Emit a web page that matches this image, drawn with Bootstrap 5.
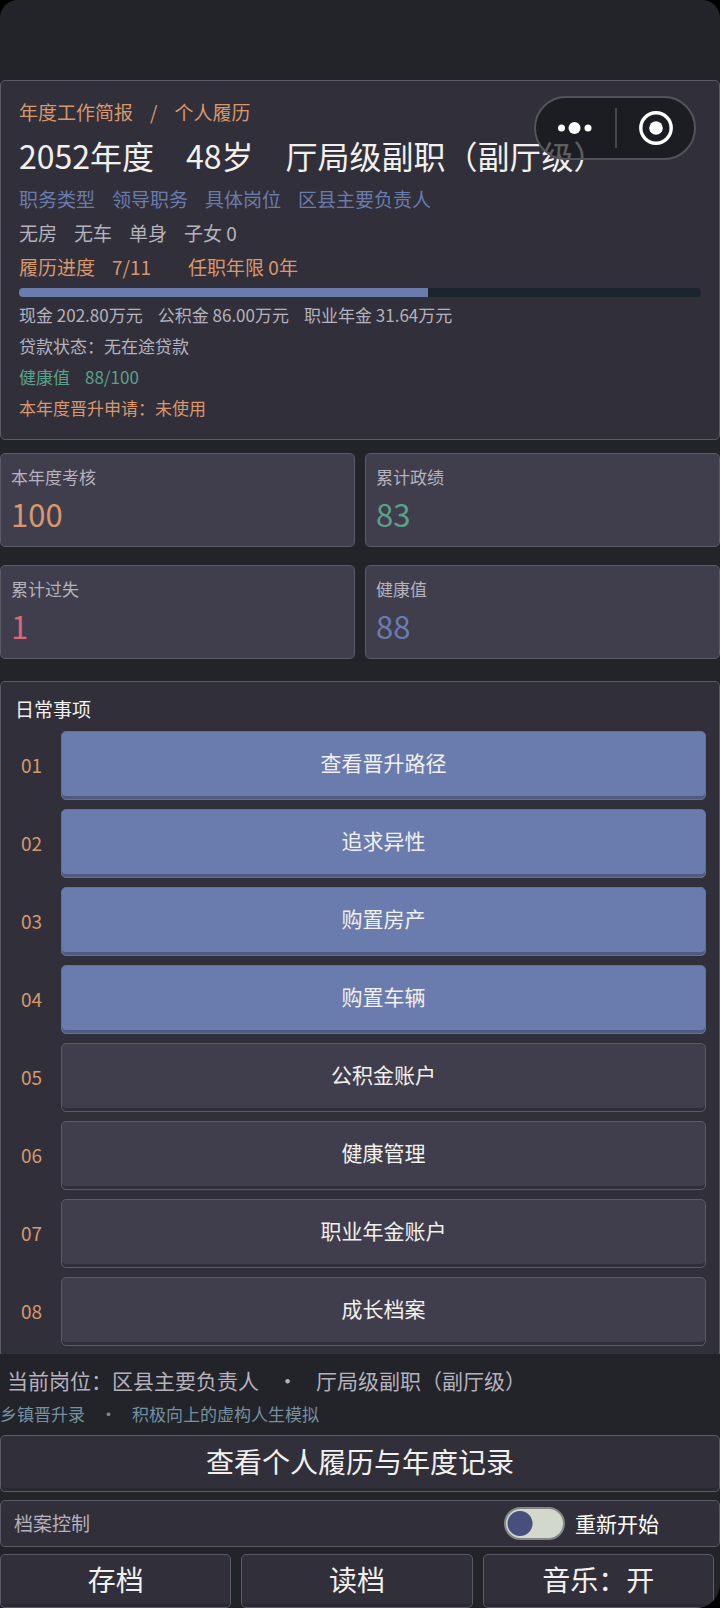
<!DOCTYPE html>
<html lang="zh-CN">
<head>
<meta charset="utf-8">
<meta name="viewport" content="width=device-width, initial-scale=1">
<title>乡镇晋升录</title>
<link href="https://cdn.jsdelivr.net/npm/bootstrap@5.3.0/dist/css/bootstrap.min.css" rel="stylesheet">
<style>
  :root {
    --ink: #f2f0ee;
    --muted: #b5b2bd;
    --orange: #d9976c;
    --blue: #6a7cae;
    --green: #5ba08a;
    --red: #d9687a;
    --panel: #31303a;
    --tile: #403e4c;
    --line: #5c5a66;
    --base: #23232a;
  }
  html { background: #000; }
  body {
    background: #000;
    color: var(--ink);
    font-family: "Noto Sans CJK SC", sans-serif;
    font-weight: 400;
    font-size: 19px;
  }
  .app-shell {
    height: 100vh;
    background: var(--base);
    border-radius: 18px 18px 24px 0;
    overflow: hidden;
  }
  .scroll-area {
    padding-top: 80px;
    overflow-y: auto;
    scrollbar-width: none;
    min-height: 0;
  }
  .scroll-area::-webkit-scrollbar { display: none; }
  .panel {
    background: var(--panel);
    border: 1px solid var(--line);
    border-radius: 5px;
  }
  .c-orange { color: var(--orange); }
  .c-blue { color: var(--blue); }
  .c-green { color: var(--green); }
  .c-red { color: var(--red); }
  .c-muted { color: var(--muted); }

  .resume { padding: 14px 18px 16px; }
  .resume .line { display: flex; gap: 17px; font-size: 19px; line-height: 34px; white-space: nowrap; }
  .resume .line-wide { margin-left: 20px; }
  .resume h1 { margin: 0; font-size: 32px; line-height: 53px; font-weight: 400; white-space: nowrap; }
  .resume .fine { display: flex; gap: 15px; font-size: 17px; line-height: 31px; white-space: nowrap; }
  .career-bar { height: 9px; margin: 4px 0 2px; border-radius: 4px; background: #1a2530; }
  .career-bar .progress-bar { background: var(--blue); }

  .stats { display: grid; grid-template-columns: 1fr 1fr; gap: 18px 10px; margin: 13px 0 22px; }
  .stat { background: var(--tile); border: 1px solid var(--line); border-radius: 5px; padding: 7px 10px 11px; }
  .stat dt { font-size: 17px; line-height: 31px; font-weight: 400; color: var(--muted); }
  .stat dd { font-size: 31px; line-height: 43px; margin: 0; }

  .tasks { padding: 10px 13px 20px 14px; }
  .tasks h2 { font-size: 19px; line-height: 34px; margin: 0 0 5px; font-weight: 400; }
  .tasks ol { display: grid; gap: 9px; }
  .task-no { width: 46px; padding-left: 6px; font-size: 19px; }
  .act {
    --bs-btn-color: var(--ink);
    --bs-btn-hover-color: #fff;
    --bs-btn-active-color: #fff;
    --bs-btn-border-color: var(--line);
    --bs-btn-hover-border-color: #7a7885;
    --bs-btn-border-radius: 5px;
    --bs-btn-font-weight: 400;
    --bs-btn-bg: var(--tile);
    --bs-btn-hover-bg: #4a4857;
    --bs-btn-font-size: 21px;
    --bs-btn-padding-y: 0;
    --bs-btn-line-height: 1;
    box-shadow: inset 0 -3px 0 #2f2e39;
    white-space: nowrap;
  }
  .tasks .act { height: 69px; padding-bottom: 7px; }
  .act-main { --bs-btn-bg: var(--blue); --bs-btn-hover-bg: #7789bb; --bs-btn-border-color: #6b6e8c; box-shadow: inset 0 -3px 0 #505b84; }
  .act-dark { --bs-btn-bg: var(--panel); --bs-btn-hover-bg: #3a3944; --bs-btn-font-size: 28px; box-shadow: inset 0 -3px 0 #2a2932; }

  .dock .post { display: flex; gap: 18px; padding: 8px 7px 0; font-size: 21px; line-height: 36px; white-space: nowrap; }
  .dock .slogan { display: flex; gap: 15px; font-size: 17px; line-height: 32px; color: #7590a0; white-space: nowrap; }
  .dock .record { height: 57px; padding-bottom: 5px; margin-top: 5px; }
  .control { height: 47px; margin: 8px 0 7px; padding: 0 60px 0 13px; }
  .control .form-check { gap: 10px; }
  .control .form-check-label { font-size: 21px; color: #fff; }
  .control .restart {
    width: 61px;
    height: 33px;
    margin: 0;
    float: none;
    border: 2px solid #85868a;
    background-color: #d3d8cc;
    background-image: radial-gradient(circle at center, #47507c 12px, transparent 13px);
    background-size: 28px 29px;
    background-repeat: no-repeat;
    background-position: left center;
    border-radius: 17px;
  }
  .control .restart:checked { background-position: right center; }
  .saves { display: grid; grid-template-columns: repeat(3, 1fr); gap: 10px; padding-right: 6px; }
  .saves .act { height: 54px; padding-bottom: 4px; }

  .capsule {
    position: absolute;
    top: 96px;
    right: 24px;
    width: 162px;
    height: 64px;
    border: 2px solid #54535c;
    border-radius: 32px;
    background: rgba(18, 19, 24, .66);
  }
  .capsule button { background: none; border: 0; padding: 0; color: #fff; }
  .capsule svg { display: block; margin: 0 auto; }
  .capsule .split { width: 2px; height: 40px; background: #46464e; }
</style>
</head>
<body>
<div class="app-shell d-flex flex-column position-relative">
  <main class="scroll-area flex-grow-1">
    <section class="panel resume">
      <div class="line c-orange"><span>年度工作简报</span><span>/</span><span>个人履历</span></div>
      <h1>2052年度　48岁　厅局级副职（副厅级）</h1>
      <div class="line c-blue"><span>职务类型</span><span>领导职务</span><span>具体岗位</span><span>区县主要负责人</span></div>
      <div class="line c-muted"><span>无房</span><span>无车</span><span>单身</span><span>子女 0</span></div>
      <div class="line c-orange"><span>履历进度</span><span>7/11</span><span class="line-wide">任职年限 0年</span></div>
      <div class="progress career-bar" role="progressbar" aria-label="履历进度" aria-valuenow="60" aria-valuemin="0" aria-valuemax="100">
        <div class="progress-bar" style="width: 60%"></div>
      </div>
      <div class="fine c-muted"><span>现金 202.80万元</span><span>公积金 86.00万元</span><span>职业年金 31.64万元</span></div>
      <div class="fine c-muted">贷款状态：无在途贷款</div>
      <div class="fine c-green"><span>健康值</span><span>88/100</span></div>
      <div class="fine c-orange">本年度晋升申请：未使用</div>
    </section>

    <dl class="stats">
      <div class="stat"><dt>本年度考核</dt><dd class="c-orange">100</dd></div>
      <div class="stat"><dt>累计政绩</dt><dd class="c-green">83</dd></div>
      <div class="stat"><dt>累计过失</dt><dd class="c-red">1</dd></div>
      <div class="stat"><dt>健康值</dt><dd class="c-blue">88</dd></div>
    </dl>

    <section class="panel tasks">
      <h2>日常事项</h2>
      <ol class="list-unstyled mb-0">
        <li class="d-flex align-items-center"><span class="task-no c-orange">01</span><button type="button" class="btn act act-main flex-grow-1">查看晋升路径</button></li>
        <li class="d-flex align-items-center"><span class="task-no c-orange">02</span><button type="button" class="btn act act-main flex-grow-1">追求异性</button></li>
        <li class="d-flex align-items-center"><span class="task-no c-orange">03</span><button type="button" class="btn act act-main flex-grow-1">购置房产</button></li>
        <li class="d-flex align-items-center"><span class="task-no c-orange">04</span><button type="button" class="btn act act-main flex-grow-1">购置车辆</button></li>
        <li class="d-flex align-items-center"><span class="task-no c-orange">05</span><button type="button" class="btn act flex-grow-1">公积金账户</button></li>
        <li class="d-flex align-items-center"><span class="task-no c-orange">06</span><button type="button" class="btn act flex-grow-1">健康管理</button></li>
        <li class="d-flex align-items-center"><span class="task-no c-orange">07</span><button type="button" class="btn act flex-grow-1">职业年金账户</button></li>
        <li class="d-flex align-items-center"><span class="task-no c-orange">08</span><button type="button" class="btn act flex-grow-1">成长档案</button></li>
      </ol>
    </section>
  </main>

  <footer class="dock flex-shrink-0">
    <div class="post c-muted"><span>当前岗位：区县主要负责人</span><span>・</span><span>厅局级副职（副厅级）</span></div>
    <div class="slogan"><span>乡镇晋升录</span><span>・</span><span>积极向上的虚构人生模拟</span></div>
    <button type="button" class="btn act act-dark record w-100">查看个人履历与年度记录</button>
    <div class="panel control d-flex align-items-center justify-content-between">
      <span class="c-muted">档案控制</span>
      <div class="form-check form-switch d-flex align-items-center p-0 m-0">
        <input class="form-check-input restart" type="checkbox" role="switch" id="restart">
        <label class="form-check-label" for="restart">重新开始</label>
      </div>
    </div>
    <div class="saves">
      <button type="button" class="btn act act-dark">存档</button>
      <button type="button" class="btn act act-dark">读档</button>
      <button type="button" class="btn act act-dark">音乐：开</button>
    </div>
  </footer>

  <div class="capsule d-flex align-items-center">
    <button type="button" class="flex-fill" aria-label="更多">
      <svg width="36" height="14" viewBox="0 0 36 14" fill="currentColor"><circle cx="3.500" cy="7" r="3.500"/><circle cx="16.500" cy="7" r="6"/><circle cx="30" cy="7" r="3.500"/></svg>
    </button>
    <span class="split"></span>
    <button type="button" class="flex-fill" aria-label="关闭">
      <svg width="34" height="34" viewBox="0 0 34 34"><circle cx="17" cy="17" r="15.200" fill="none" stroke="currentColor" stroke-width="3.400"/><circle cx="17" cy="17" r="6.800" fill="currentColor"/></svg>
    </button>
  </div>
</div>
<script src="https://cdn.jsdelivr.net/npm/bootstrap@5.3.0/dist/js/bootstrap.bundle.min.js"></script>
</body>
</html>
